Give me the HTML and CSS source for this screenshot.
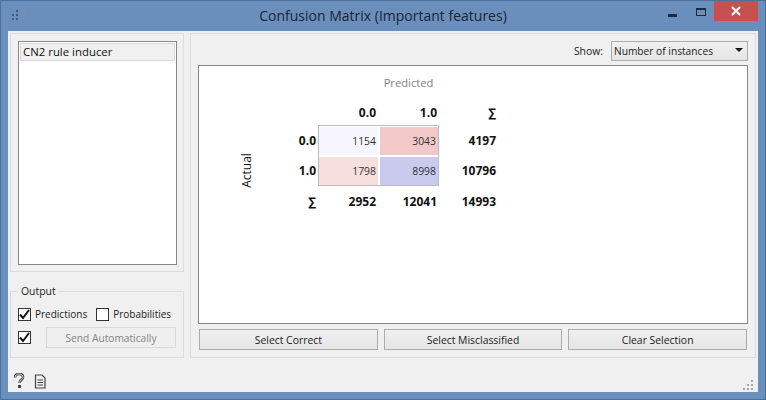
FILE: index.html
```html
<!DOCTYPE html>
<html lang="en">
<head>
    <meta charset="UTF-8">
    <title>Confusion Matrix (Important features)</title>
    <link rel="stylesheet" href="styles.css">
</head>
<body>
    <div class="window">
        <div class="titlebar">
            <svg class="app-icon" width="14" height="12" viewBox="0 0 14 12">
                <g fill="#4a5a70">
                    <rect x="0" y="4" width="2" height="2"/><rect x="0" y="8" width="2" height="2"/>
                    <rect x="4" y="0" width="2" height="2"/><rect x="4" y="4" width="2" height="2"/><rect x="4" y="8" width="2" height="2"/>
                </g>
                <g fill="#7e8ea6">
                    <rect x="8" y="0" width="2" height="2"/><rect x="8" y="4" width="2" height="2"/><rect x="8" y="8" width="2" height="2"/>
                    <rect x="11" y="0" width="2" height="2"/><rect x="11" y="4" width="2" height="2"/><rect x="11" y="8" width="2" height="2"/>
                </g>
            </svg>
            <div class="title">Confusion Matrix (Important features)</div>
            <div class="win-buttons">
                <div class="win-min"></div>
                <div class="win-max"></div>
                <div class="win-close">
                    <svg width="10" height="10" viewBox="0 0 10 10"><path d="M1 1L9 9M9 1L1 9" stroke="#fff" stroke-width="2"/></svg>
                </div>
            </div>
        </div>

        <div class="content">
            <div class="main">
                <div class="sidebar">
                    <div class="panel list-panel">
                        <div class="listbox">
                            <div class="list-item">CN2 rule inducer</div>
                        </div>
                    </div>
                    <div class="group">
                        <div class="group-title">Output</div>
                        <div class="check-row">
                            <label class="check"><span class="box checked"><svg width="11" height="11" viewBox="0 0 11 11"><path d="M1 5.5L4 9L10 1" fill="none" stroke="#111" stroke-width="2"/></svg></span>Predictions</label>
                            <label class="check"><span class="box"></span>Probabilities</label>
                        </div>
                        <div class="send-row">
                            <span class="box checked"><svg width="11" height="11" viewBox="0 0 11 11"><path d="M1 5.5L4 9L10 1" fill="none" stroke="#111" stroke-width="2"/></svg></span>
                            <button class="btn send" disabled>Send Automatically</button>
                        </div>
                    </div>
                </div>

                <div class="panel right">
                    <div class="show-row">
                        <span class="show-label">Show:</span>
                        <div class="combo">Number of instances<span class="arrow"></span></div>
                    </div>
                    <div class="plot">
                        <div class="matrix">
                            <div class="predicted">Predicted</div>
                            <div class="actual"><span>Actual</span></div>
                            <div class="hd col-hd c1">0.0</div>
                            <div class="hd col-hd c2">1.0</div>
                            <div class="hd col-hd c3">∑</div>
                            <div class="hd r1">0.0</div>
                            <div class="hd r2">1.0</div>
                            <div class="cells">
                                <div class="cell v1">1154</div>
                                <div class="cell v2">3043</div>
                                <div class="cell v3">1798</div>
                                <div class="cell v4">8998</div>
                            </div>
                            <div class="hd s1">4197</div>
                            <div class="hd s2">10796</div>
                            <div class="hd r3">∑</div>
                            <div class="hd b1">2952</div>
                            <div class="hd b2">12041</div>
                            <div class="hd b3">14993</div>
                        </div>
                    </div>
                    <div class="btn-row">
                        <button class="btn">Select Correct</button>
                        <button class="btn">Select Misclassified</button>
                        <button class="btn">Clear Selection</button>
                    </div>
                </div>
            </div>

            <div class="statusbar">
                <svg width="14" height="16" viewBox="0 0 14 16"><path d="M3 4.5C3 2 5 1 7 1C9.5 1 11 2.5 11 4.5C11 6.5 7.5 7 7.5 10" fill="none" stroke="#444" stroke-width="2.6"/><path d="M3 4.5C3 2 5 1 7 1C9.5 1 11 2.5 11 4.5C11 6.5 7.5 7 7.5 10" fill="none" stroke="#f0f0f0" stroke-width="0.8"/><rect x="6" y="12" width="3" height="3" fill="#444"/></svg>
                <svg width="12" height="15" viewBox="0 0 12 15"><path d="M1.5 1H8L11 4V14H1.5Z M3.5 6H9 M3.5 8.5H9 M3.5 11H9" fill="none" stroke="#444" stroke-width="1.2"/></svg>
                <svg class="grip" width="10" height="10" viewBox="0 0 10 10">
                    <g fill="#a8a8a8"><rect x="8" y="0" width="2" height="2"/><rect x="4" y="4" width="2" height="2"/><rect x="8" y="4" width="2" height="2"/><rect x="0" y="8" width="2" height="2"/><rect x="4" y="8" width="2" height="2"/><rect x="8" y="8" width="2" height="2"/></g>
                </svg>
            </div>
        </div>
    </div>
</body>
</html>
```
FILE: styles.css
```css
* {
    box-sizing: border-box;
}
html, body {
    margin: 0;
    padding: 0;
}
body {
    width: 766px;
    height: 400px;
    overflow: hidden;
    font-family: "Open Sans", "Noto Sans", sans-serif;
    font-size: 10.4px;
    color: #222;
}
.window {
    height: 400px;
    display: flex;
    flex-direction: column;
    background: #6a8fbd;
    border: 1px solid #4e6f99;
    padding: 0 7px 7px;
}
.titlebar {
    height: 30px;
    flex: none;
    display: flex;
    align-items: flex-start;
    position: relative;
}
.app-icon {
    margin: 9px 0 0 4px;
}
.title {
    position: absolute;
    left: 0;
    right: 0;
    top: 5px;
    text-align: center;
    font-size: 14px;
    color: #1c2430;
}
.win-buttons {
    margin-left: auto;
    display: flex;
    align-items: flex-start;
}
.win-min {
    width: 9px;
    height: 3px;
    background: #1f2a3a;
    margin: 13px 19px 0 0;
}
.win-max {
    width: 10px;
    height: 8px;
    border: 1px solid #1f2a3a;
    border-top-width: 2px;
    margin: 7px 8px 0 0;
}
.win-close {
    width: 44px;
    height: 20px;
    background: #c75050;
    display: flex;
    align-items: center;
    justify-content: center;
}
.content {
    flex: 1;
    display: flex;
    flex-direction: column;
    background: #f0f0f0;
    padding: 2px 2px 0;
}
.main {
    display: flex;
    gap: 6px;
    height: 325px;
}
.sidebar {
    width: 174px;
    display: flex;
    flex-direction: column;
}
.panel {
    border: 1px solid #dcdcdc;
}
.list-panel {
    height: 239px;
    padding: 7px 6px 6px 7px;
}
.listbox {
    height: 100%;
    background: #fff;
    border: 1px solid #828790;
    padding: 1px;
}
.list-item {
    height: 18px;
    line-height: 16px;
    padding-left: 2px;
    background: #f0f0f0;
    border: 1px solid #dadada;
    color: #111;
    font-size: 11.4px;
}
.group {
    position: relative;
    margin-top: 19px;
    height: 67px;
    border: 1px solid #dcdcdc;
    padding: 15px 0 0 7px;
}
.group-title {
    position: absolute;
    left: 7px;
    top: -9px;
    padding: 0 3px;
    background: #f0f0f0;
    line-height: 16px;
}
.check-row {
    display: flex;
    gap: 9px;
    font-size: 10px;
}
.check {
    display: flex;
    align-items: center;
    gap: 4px;
}
.box {
    width: 13px;
    height: 13px;
    flex: none;
    background: #fff;
    border: 1px solid #333;
    display: flex;
    align-items: center;
    justify-content: center;
}
.send-row {
    display: flex;
    align-items: center;
    gap: 15px;
    margin-top: 6px;
}
.btn {
    height: 21px;
    font: inherit;
    color: #222;
    border: 1px solid #acacac;
    background: linear-gradient(#f0f0f0, #e5e5e5);
    padding: 0;
}
.send {
    width: 130px;
    font-size: 10.2px;
    background: #efefef;
    border-color: #d9d9d9;
    color: #838383;
}
.right {
    flex: 1;
    display: flex;
    flex-direction: column;
    padding: 7px 7px 7px 7px;
}
.show-row {
    display: flex;
    justify-content: flex-end;
    align-items: center;
    gap: 8px;
}
.combo {
    width: 137px;
    height: 20px;
    line-height: 18px;
    padding-left: 2px;
    font-size: 10.2px;
    border: 1px solid #acacac;
    background: linear-gradient(#f0f0f0, #e5e5e5);
    position: relative;
}
.arrow {
    position: absolute;
    right: 4px;
    top: 6px;
    border-left: 4px solid transparent;
    border-right: 4px solid transparent;
    border-top: 4px solid #111;
}
.plot {
    height: 259px;
    margin-top: 4px;
    background: #fff;
    border: 1px solid #828790;
    padding: 8px 0 0 37px;
}
.matrix {
    display: grid;
    grid-template-columns: 20px 62px 60px 61px 57px;
    grid-template-rows: 17px 34px 30px 31px 30px;
    align-items: center;
}
.predicted {
    grid-column: 3 / 6;
    grid-row: 1;
    text-align: center;
    padding-left: 3px;
    color: #808080;
    font-size: 11.2px;
}
.actual {
    grid-column: 1;
    grid-row: 3 / 6;
    display: flex;
    justify-content: center;
    align-items: center;
}
.actual span {
    transform: rotate(-90deg);
    white-space: nowrap;
    font-size: 12px;
    color: #111;
}
.hd {
    font-weight: bold;
    font-size: 12px;
    text-align: right;
    color: #111;
}
.col-hd { padding-top: 8px; }
.c1 { grid-column: 3; grid-row: 2; padding-right: 2px; }
.c2 { grid-column: 4; grid-row: 2; padding-right: 2px; }
.c3 { grid-column: 5; grid-row: 2; }
.r1 { grid-column: 2; grid-row: 3; padding-right: 2px; }
.r2 { grid-column: 2; grid-row: 4; padding-right: 2px; }
.r3 { grid-column: 2; grid-row: 5; padding-right: 2px; }
.s1 { grid-column: 5; grid-row: 3; }
.s2 { grid-column: 5; grid-row: 4; }
.b1 { grid-column: 3; grid-row: 5; padding-right: 2px; }
.b2 { grid-column: 4; grid-row: 5; padding-right: 2px; }
.b3 { grid-column: 5; grid-row: 5; }
.cells {
    grid-column: 3 / 5;
    grid-row: 3 / 5;
    align-self: start;
    height: 61px;
    display: grid;
    grid-template-columns: 59px 58px;
    grid-template-rows: 28px 28px;
    gap: 2px;
    padding-top: 1px;
    border: 1px solid #bcbcbc;
}
.cell {
    text-align: right;
    padding-right: 2px;
    line-height: 28px;
    color: #333;
}
.v1 { background: #f7f6fe; }
.v2 { background: #f2c9c8; }
.v3 { background: #f6dfdd; }
.v4 { background: #c9caee; }
.btn-row {
    display: flex;
    gap: 6px;
    margin-top: 5px;
    padding: 0 1px;
}
.btn-row .btn {
    flex: 1;
}
.statusbar {
    flex: 1;
    display: flex;
    align-items: center;
    gap: 8px;
    padding: 12px 3px 0 2px;
}
.grip {
    margin: auto 0 0 auto;
    margin-bottom: 2px;
}
```
